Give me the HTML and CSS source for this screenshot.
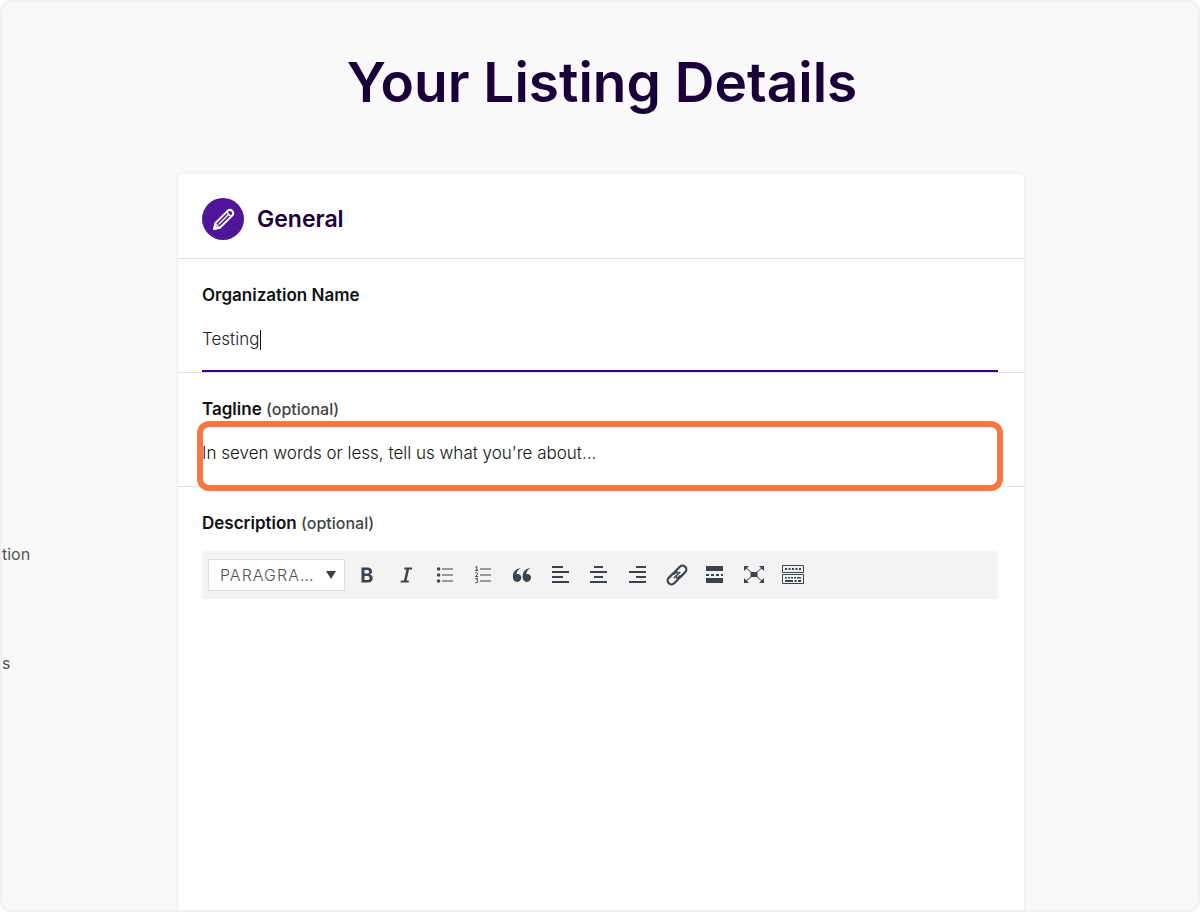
FILE: index.html
```html
<!DOCTYPE html>
<html lang="en">
<head>
    <meta charset="UTF-8">
    <meta name="viewport" content="width=device-width, initial-scale=1.0">
    <title>Your Listing Details</title>
    <link rel="stylesheet" href="styles.css">
</head>
<body>
    <div class="page">
        <h1 class="page-title">Your Listing Details</h1>
        <div class="columns">
            <nav class="side-nav">
                <a href="#description">tion</a>
                <a href="#details">s</a>
            </nav>
            <form class="card">
                <div class="card-header">
                    <span class="card-icon">
                        <svg width="42" height="42" viewBox="0 0 42 42" fill="none" stroke="#fff" stroke-linejoin="round" stroke-linecap="round">
                            <path d="M12 31L13.3 25.2L25.6 12.9Q28 10.8 30.2 13Q32.3 15.2 30.2 17.5L17.9 29.8Z" stroke-width="2"/>
                            <path d="M12 31L13 27.5L15.5 30Z" stroke-width="1" fill="#fff"/>
                            <path d="M25 14.600L28.600 18.200M13.800 26L17.200 29.400" stroke-width="1.400"/>
                            <path d="M17 26L26 17" stroke-width="1.500"/>
                        </svg>
                    </span>
                    <h2>General</h2>
                </div>
                <div class="form-group">
                    <label for="name">Organization Name</label>
                    <input type="text" id="name" class="active" value="Testing">
                    <span class="caret"></span>
                </div>
                <div class="form-group highlighted">
                    <label for="tagline">Tagline <small>(optional)</small></label>
                    <input type="text" id="tagline" placeholder="In seven words or less, tell us what you're about...">
                </div>
                <div class="form-group editor">
                    <label for="description">Description <small>(optional)</small></label>
                    <div class="toolbar">
                        <select class="format" aria-label="Format">
                            <option>Paragraph</option>
                            <option>Heading 1</option>
                            <option>Heading 2</option>
                        </select>
                        <div class="buttons">
                            <button type="button" aria-label="Bold">
                                <svg width="20" height="20" viewBox="0 0 20 20"><path fill-rule="evenodd" d="M4.500 2.5H10.4C13.5 2.5 15 4 15 6.2C15 7.9 14.2 9 12.7 9.5C14.6 9.9 15.7 11.3 15.7 13.2C15.7 15.900 13.8 17.5 10.6 17.5H4.500ZM7.5 4.900V8.600H10C11.4 8.600 12.1 7.900 12.1 6.700C12.1 5.500 11.4 4.900 10 4.900ZM7.5 10.900V15.100H10.300C11.900 15.100 12.700 14.400 12.700 13C12.700 11.600 11.900 10.900 10.300 10.900Z"/></svg>
                            </button>
                            <button type="button" aria-label="Italic">
                                <svg width="20" height="20" viewBox="0 0 20 20"><path d="M8.500 2.500H16.300L15.900 4.500H13L10.600 15.500H13L12.500 17.500H4.400L4.900 15.500H8L10.400 4.500H8Z"/></svg>
                            </button>
                            <button type="button" aria-label="Bulleted list">
                                <svg width="20" height="20" viewBox="0 0 20 20"><circle cx="3.600" cy="4" r="1.800"/><circle cx="3.600" cy="10" r="1.800"/><circle cx="3.600" cy="16" r="1.800"/><path d="M7 3.500h11v1H7zM7 9.500h11v1H7zM7 15.500h11v1H7z"/></svg>
                            </button>
                            <button type="button" aria-label="Numbered list">
                                <svg width="20" height="20" viewBox="0 0 20 20"><path d="M7 3.500h11v1H7zM7 9.500h11v1H7zM7 15.500h11v1H7z"/><path fill="none" stroke="#3c434a" stroke-width="1" d="M2.400 2.200L3.800 1.500V5.500M2.200 5.600H5.200M2.300 8Q3.800 7.200 4.600 8.200Q5 9.300 2.500 11.500H5.200M2.300 13.600H4.700L3.600 15.200Q5.100 15.400 4.900 16.800Q4.300 18.400 2.200 17.600"/></svg>
                            </button>
                            <button type="button" aria-label="Blockquote">
                                <svg width="20" height="20" viewBox="0 0 20 20"><path d="M8.600 3.200C5.900 4.700 4.700 6.600 4.500 9.100C7.200 8.400 9.300 10 9.300 12.600C9.300 15.200 7.400 16.900 5.200 16.900C2.500 16.900.9 14.700.9 11.600C.9 7.100 3.700 3.500 8.600 3.200ZM18.300 3.200C15.600 4.700 14.400 6.600 14.200 9.100C16.900 8.400 19 10 19 12.600C19 15.200 17.100 16.900 14.900 16.900C12.200 16.900 10.600 14.700 10.600 11.600C10.600 7.100 13.400 3.500 18.300 3.200Z"/></svg>
                            </button>
                            <button type="button" aria-label="Align left">
                                <svg width="20" height="20" viewBox="0 0 20 20"><path d="M1 1h11v2H1zM1 6h17v2H1zM1 11h11v2H1zM1 16h17v2H1z"/></svg>
                            </button>
                            <button type="button" aria-label="Align center">
                                <svg width="20" height="20" viewBox="0 0 20 20"><path d="M5 1h9v2H5zM1 6h17v2H1zM5 11h9v2H5zM1 16h17v2H1z"/></svg>
                            </button>
                            <button type="button" aria-label="Align right">
                                <svg width="20" height="20" viewBox="0 0 20 20"><path d="M8 1h10v2H8zM1 6h17v2H1zM8 11h10v2H8zM1 16h17v2H1z"/></svg>
                            </button>
                            <button type="button" aria-label="Insert link">
                                <svg width="22" height="22" viewBox="0 0 22 22" fill="none" stroke="#3c434a" stroke-width="2.200" stroke-linecap="round"><g transform="rotate(-45 11 11)"><path d="M13 9.500A3.800 3.800 0 0 0 9.500 7.200H3.200A3.800 3.800 0 0 0 3.200 14.800H9.500A3.800 3.800 0 0 0 12 13.800"/><path d="M9 12.500A3.800 3.800 0 0 0 12.500 14.800H18.800A3.800 3.800 0 0 0 18.800 7.200H12.500A3.800 3.800 0 0 0 10 8.200"/><path d="M7 11H15" stroke-width="1.500"/></g></svg>
                            </button>
                            <button type="button" aria-label="Read more tag">
                                <svg width="20" height="20" viewBox="0 0 20 20"><path d="M1 1h17v5H1zM1 9h3v2H1zM6 9h3v2H6zM11 9h3v2h-3zM16 9h2v2h-2zM1 13h17v5H1z"/></svg>
                            </button>
                            <button type="button" aria-label="Fullscreen">
                                <svg width="20" height="20" viewBox="0 0 20 20"><path d="M6.500 7h7v5h-7zM0 1h5L0 6zM20 1h-5l5 5zM0 18h5L0 13zM20 18h-5l5-5z"/><path fill="none" stroke="#3c434a" d="M2 3l16 13M18 3L2 16"/></svg>
                            </button>
                            <button type="button" aria-label="Toolbar toggle">
                                <svg width="22" height="20" viewBox="0 0 22 20"><path fill="none" stroke="#3c434a" d="M.5.5h21v7H.5zM.5 9.500h21v9H.5z"/><path d="M3 3h2v2H3zM6.500 3h2v2h-2zM10 3h2v2h-2zM13.500 3h2v2h-2zM17 3h2v2h-2zM3 12h2v1.500H3zM6 12h2v1.500H6zM9 12h2v1.500H9zM12 12h2v1.500h-2zM15 12h4v1.500h-4zM3 15h8v2H3zM12.500 15h2v2h-2zM16 15h3v2h-3z"/></svg>
                            </button>
                        </div>
                    </div>
                    <textarea id="description"></textarea>
                </div>
            </form>
        </div>
    </div>
</body>
</html>
```
FILE: styles.css
```css
*,
*::after {
    box-sizing: border-box;
}
body {
    margin: 0;
    background-color: #fff;
    color: #111;
    font-family: Inter, "Liberation Sans", sans-serif;
    font-size: 17px;
}
.page {
    height: 100vh;
    overflow: hidden;
    border: 2px solid #f1f1f8;
    border-radius: 12px;
    background-color: #f9f9f9;
}
.page-title {
    margin: 0;
    padding: 40px 0 52px 4px;
    color: #190038;
    font-size: 55px;
    line-height: 80px;
    font-weight: 600;
    text-align: center;
}
.columns {
    display: grid;
    grid-template-columns: 176px 1fr 174px;
}
.side-nav {
    display: flex;
    flex-direction: column;
    gap: 85px;
    padding-top: 368px;
}
.side-nav a {
    color: #555;
    font-size: 16px;
    line-height: 24px;
    text-decoration: none;
}
.card {
    background-color: #fff;
    border-radius: 5px;
    box-shadow: 0 0 4px rgba(0, 0, 0, 0.07);
}
.card-header {
    display: flex;
    align-items: center;
    gap: 13px;
    padding: 24px 24px 18px;
    border-bottom: 1px solid #e2e2e2;
}
.card-icon {
    display: flex;
    width: 42px;
    height: 42px;
    border-radius: 50%;
    background-color: #50149a;
}
.card-header h2 {
    margin: 0;
    color: #190038;
    font-size: 23px;
    line-height: 40px;
    font-weight: 600;
}
.form-group {
    position: relative;
    padding: 24px 26px 0 24px;
    border-bottom: 1px solid #e2e2e2;
}
.form-group label {
    display: block;
    line-height: 24px;
    font-weight: 600;
}
.form-group small {
    color: #444;
    font-size: 16px;
    line-height: 16px;
    font-weight: 500;
}
.form-group input {
    display: block;
    width: 100%;
    height: 65px;
    padding: 0;
    border: none;
    border-bottom: 2px solid transparent;
    outline: none;
    background-color: transparent;
    color: #222;
    font-family: inherit;
    font-size: 17px;
    font-weight: 300;
}
.form-group input::placeholder {
    color: #111;
    opacity: 1;
}
.form-group input.active {
    border-bottom-color: #330099;
    caret-color: transparent;
}
.caret {
    position: absolute;
    top: 71px;
    left: 82px;
    width: 1px;
    height: 20px;
    background-color: #111;
}
.highlighted::after {
    content: "";
    position: absolute;
    top: 48px;
    right: 21px;
    left: 19px;
    height: 70px;
    border: 6px solid #ff7542;
    border-radius: 12px;
    pointer-events: none;
    z-index: 1;
}
.toolbar {
    display: flex;
    align-items: center;
    height: 48px;
    margin-top: 16px;
    padding: 0 6px;
    border-radius: 4px;
    background-color: #f3f3f3;
}
.toolbar .format {
    width: 137px;
    height: 32px;
    margin-right: 3px;
    padding: 0 28px 0 11px;
    border: 1px solid #ddd;
    border-radius: 0;
    appearance: none;
    background: #fff url("data:image/svg+xml,%3Csvg xmlns='http://www.w3.org/2000/svg' width='10' height='8'%3E%3Cpath d='M0 0h10L5 8z' fill='%233c434a'/%3E%3C/svg%3E") no-repeat right 8px center;
    color: #555;
    font-family: inherit;
    font-size: 16px;
    font-weight: 300;
    letter-spacing: 1px;
    text-overflow: ellipsis;
    text-transform: uppercase;
}
.buttons {
    display: grid;
    grid-template-columns: repeat(12, 1fr);
    width: 464px;
}
.buttons button {
    display: flex;
    align-items: center;
    justify-content: center;
    height: 32px;
    padding: 0;
    border: none;
    background: none;
    cursor: pointer;
}
.buttons svg {
    fill: #3c434a;
}
.buttons svg[fill="none"] {
    fill: none;
}
.editor textarea {
    display: block;
    width: 100%;
    height: 320px;
    padding: 16px 0;
    border: none;
    outline: none;
    resize: vertical;
    font-family: inherit;
    font-size: 17px;
}
```
